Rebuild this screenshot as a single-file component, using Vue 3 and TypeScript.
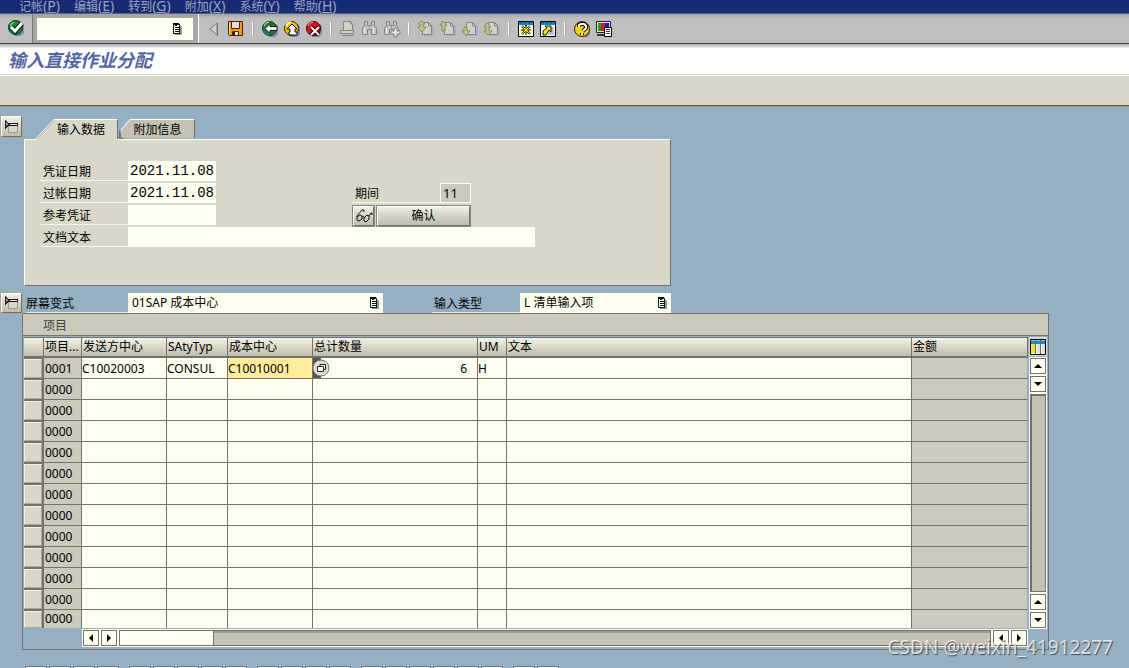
<script setup lang="ts">
import { ref } from 'vue'

interface MenuEntry { text: string; key: string }
interface Tool { id: string; label: string; disabled?: boolean }
interface Row { item: string; sender: string; activity: string; center: string; quantity: string; unit: string; text: string }

const menus: MenuEntry[] = [
  { text: '记帐', key: 'P' },
  { text: '编辑', key: 'E' },
  { text: '转到', key: 'G' },
  { text: '附加', key: 'X' },
  { text: '系统', key: 'Y' },
  { text: '帮助', key: 'H' },
]

const toolGroups: Tool[][] = [
  [{ id: 'collapse', label: '收起' }, { id: 'save', label: '保存' }],
  [{ id: 'back', label: '返回' }, { id: 'exit', label: '退出' }, { id: 'cancel', label: '取消' }],
  [
    { id: 'print', label: '打印', disabled: true },
    { id: 'find', label: '查找', disabled: true },
    { id: 'findnext', label: '查找下一个', disabled: true },
  ],
  [
    { id: 'first', label: '第一页', disabled: true },
    { id: 'prev', label: '上一页', disabled: true },
    { id: 'next', label: '下一页', disabled: true },
    { id: 'last', label: '最后一页', disabled: true },
  ],
  [{ id: 'session', label: '新建会话' }, { id: 'shortcut', label: '创建快捷方式' }],
  [{ id: 'help', label: '帮助' }, { id: 'layout', label: '定制本地布局' }],
]

const command = ref('')
const activeTab = ref(0)
const documentDate = ref('2021.11.08')
const postingDate = ref('2021.11.08')
const reference = ref('')
const documentText = ref('')
const period = ref('11')
const variant = ref('01SAP 成本中心')
const inputType = ref('L 清单输入项')

const blank = (): Row => ({ item: '0000', sender: '', activity: '', center: '', quantity: '', unit: '', text: '' })
const rows = ref<Row[]>([
  { item: '0001', sender: 'C10020003', activity: 'CONSUL', center: 'C10010001', quantity: '6', unit: 'H', text: '' },
  ...Array.from({ length: 12 }, blank),
])

const footerGroups = [4, 5, 4, 6, 2]
</script>

<template>
  <div class="window">
    <nav class="menubar">
      <a v-for="m in menus" :key="m.key" href="#">{{ m.text }}<span class="accel">(<u>{{ m.key }}</u>)</span></a>
    </nav>

    <header class="toolbar">
      <button class="tool enter" aria-label="回车">
        <svg width="18" height="18" viewBox="0 0 18 18">
          <path d="M7 4h8l2 3v7l-3 3H8z" fill="#8585bd" />
          <circle cx="8.500" cy="8.500" r="7" fill="#168a28" stroke="#052d08" />
          <path d="M3 9c0 3 2 5 5 5" stroke="#0f7d86" stroke-width="2" fill="none" />
          <path d="M4 5l3-2M4 7V5" stroke="#c2efb0" fill="none" />
          <path d="M4 8l4 4 7-8" stroke="#032504" stroke-width="5" fill="none" />
          <path d="M4 8l4 4 7-8" stroke="#fff" stroke-width="3" fill="none" />
        </svg>
      </button>
      <div class="command">
        <div class="command-box">
          <input v-model="command" aria-label="命令" />
          <svg class="list-icon" width="10" height="12" viewBox="0 0 10 12" shape-rendering="crispEdges"><path d="M3 3h7v9H3z" fill="#999" /><path d="M1.500 1.500h6v9h-6z" fill="#fffff0" stroke="#111" /><path d="M0 0h7L4 3H3z" fill="#000" /><path d="M3 4.500h4M3 6.500h4M3 8.500h4" stroke="#111" /></svg>
        </div>
      </div>
      <div class="tools">
        <div v-for="(group, g) in toolGroups" :key="g" class="tool-group">
          <button v-for="t in group" :key="t.id" class="tool" :aria-label="t.label" :disabled="t.disabled">
            <svg width="18" height="18" viewBox="0 0 18 18">
              <g v-if="t.id === 'collapse'">
                <path d="M13 3v13l-2-1z" fill="#f4f4f4" /><path d="M12 3v12L5 9z" fill="#d0d0cc" stroke="#77776f" /><path d="M12.500 3v13" stroke="#777" />
              </g>
              <g v-else-if="t.id === 'save'">
                <path d="M1.500 1.500h14v14h-13l-1-1z" fill="#ff9c00" stroke="#3d1c00" />
                <path d="M4.500 1.500h8v7h-8z" fill="#e3daf0" stroke="#4d2200" />
                <path d="M5.500 11.500h6v4h-6z" fill="#eee" stroke="#4d2200" /><path d="M6 12h2v3H6z" fill="#352010" />
                <path d="M2 2h1v12H2z" fill="#ffe28a" />
              </g>
              <g v-else-if="t.id === 'back'">
                <path d="M7 4h8l2 3v7l-3 3H8z" fill="#8585bd" /><circle cx="8.500" cy="8.500" r="7" fill="#188b28" stroke="#052d08" />
                <path d="M3 9c0 3 2 5 5 5" stroke="#0f7d86" stroke-width="2" fill="none" />
                <path d="M3 6l2-3 3-1" fill="none" stroke="#b6e8ac" />
                <path d="M4 8.500l5-5v3h7v4H9v3z" fill="#fff" stroke="#111" />
              </g>
              <g v-else-if="t.id === 'exit'">
                <path d="M7 4h8l2 3v7l-3 3H8z" fill="#8585bd" /><circle cx="8.500" cy="8.500" r="7" fill="#f8bd00" stroke="#302200" />
                <path d="M3 6l2-3 3-1" fill="none" stroke="#fff7a0" stroke-width="2" />
                <path d="M9 4l5 5h-2v3h2v3H6v-3h1V9H4z" fill="#fff" stroke="#111" />
              </g>
              <g v-else-if="t.id === 'cancel'">
                <path d="M7 4h8l2 3v7l-3 3H8z" fill="#8585bd" /><circle cx="8.500" cy="8.500" r="7" fill="#df1019" stroke="#3b0004" />
                <path d="M3 6l2-3 3-1" fill="none" stroke="#ffb0a5" />
                <path d="M6 7l8 8M14 7l-8 8" stroke="#210000" stroke-width="4" /><path d="M6 7l8 8M14 7l-8 8" stroke="#fff" stroke-width="2" />
              </g>
              <g v-else-if="t.id === 'print'">
                <path d="M4.500 1.500h7l2 3v6h-9z" fill="#d3d2c3" stroke="#828280" /><path d="M1.500 10.500h13v3h-13zM3 15.500h12" fill="#d3d2c3" stroke="#828280" /><path d="M11.500 1v3h2" fill="none" stroke="#828280" />
              </g>
              <g v-else-if="t.id === 'find' || t.id === 'findnext'">
                <path d="M3.500 1.500h3v4h4v-4h3v4l2 3v6h-5v-5h-4v5h-5v-6l2-3z" fill="#c8c7bb" stroke="#828280" />
                <path d="M3 5.500h4M10 5.500h4M8.500 6v4" stroke="#969690" /><path d="M3.500 8v6M12.500 8v6" stroke="#eee" />
                <path v-if="t.id === 'findnext'" d="M11 8h3v3h3v3h-3v3h-3v-3H8v-3h3z" fill="#e7e7d9" stroke="#828280" />
              </g>
              <g v-else-if="t.id === 'first' || t.id === 'prev' || t.id === 'next' || t.id === 'last'">
                <path d="M7 5h8l2 2v9H7z" fill="#a8add0" />
                <path d="M5.500 2.500h6l3 3v9h-9z" fill="#d2d1c3" stroke="#828280" /><path d="M11.500 2v4h3" fill="none" stroke="#828280" />
                <path v-if="t.id === 'first'" d="M4 1l4 3H6v3h3l-4 5-4-5h2V4H1z" fill="#c8c588" stroke="#858565" />
                <path v-else-if="t.id === 'prev'" d="M4 1l4 4H6v6H3V5H1z" fill="#c8c588" stroke="#858565" />
                <path v-else-if="t.id === 'next'" d="M3 7h3v4h3l-4 5-4-5h2z" fill="#c8c588" stroke="#858565" />
                <path v-else d="M4 3l4 4H6v4h3l-4 4-4-4h2V7H1z" fill="#c8c588" stroke="#858565" />
              </g>
              <g v-else-if="t.id === 'session'">
                <path d="M1.500 1.500h15v15h-15z" fill="#fff" stroke="#000" /><path d="M2 2h14v3H2z" fill="#1687bd" /><path d="M3 3h2M7 3h2M11 3h2" stroke="#0b517c" />
                <path d="M9 5v10M4 10h10M5 6l8 8M13 6l-8 8" stroke="#171700" stroke-width="2" /><path d="M9 6v9M4 10h10M5 6l8 8M13 6l-8 8" stroke="#fff200" />
              </g>
              <g v-else-if="t.id === 'shortcut'">
                <path d="M1.500 1.500h15v15h-15z" fill="#fff" stroke="#000" /><path d="M2 2h14v3H2z" fill="#1687bd" /><path d="M3 3h2M7 3h2M11 3h2" stroke="#0b517c" />
                <path d="M10 7h5v8H9z" fill="#bdbfe2" />
                <path d="M4 15v-4l4-3-2-2h6v6l-2-2-3 5z" fill="#ffe300" stroke="#111" />
              </g>
              <g v-else-if="t.id === 'help'">
                <path d="M7 4h8l2 3v7l-3 3H8z" fill="#7777ac" /><circle cx="9" cy="9" r="7.500" fill="#ffd000" stroke="#332400" />
                <path d="M6 7V5l2-1h3l2 2v2l-3 3M9 13v2" fill="none" stroke="#111" stroke-width="4" /><path d="M6 7V5l2-1h3l2 2v2l-3 3M9 13v2" fill="none" stroke="#fff" stroke-width="2" />
              </g>
              <g v-else>
                <path d="M1.500 1.500h14v11h-14z" fill="#e4e4e4" stroke="#222" /><path d="M3 3h3v8H3z" fill="#00ad20" /><path d="M6 3h4v8H6z" fill="#ed1111" /><path d="M10 3h4v8h-4z" fill="#1716e5" /><path d="M2 15h8" stroke="#333" stroke-width="2" />
                <path d="M9.500 7.500h7v9h-7z" fill="#fff" stroke="#000" /><path d="M11 9.500h4M11 11.500h4M11 13.500h4" stroke="#333" />
              </g>
            </svg>
          </button>
        </div>
      </div>
    </header>

    <div class="title-row"><h1>输入直接作业分配</h1></div>
    <div class="app-toolbar"></div>

    <main class="workspace">
      <section class="header-block">
        <button class="raised square" aria-label="收起抬头">
          <svg width="15" height="14" viewBox="0 0 15 14" shape-rendering="crispEdges"><path d="M4.500 5.500h9v7h-9z" fill="#d9d8c8" stroke="#999990" /><path d="M3 4.500h11" stroke="#111" stroke-width="3" /><path d="M4 4.500h9" stroke="#fff" /><path d="M1.500 1l4 3-4 4z" fill="#9a78bd" stroke="#222" /></svg>
        </button>
        <div class="tabs-area">
          <div class="tabs" role="tablist">
            <button class="tab first" role="tab" :aria-selected="activeTab === 0" @click="activeTab = 0">
              <svg width="84" height="22" viewBox="0 0 84 22"><path d="M0 22L20 1h62v21z" fill="#d9d8c8" /><path d="M0 20.500L19 .5h63" fill="none" stroke="#fff" /><path d="M82.500 1v19" stroke="#74736b" /></svg>
              <span>输入数据</span>
            </button>
            <button class="tab second" role="tab" :aria-selected="activeTab === 1" @click="activeTab = 1">
              <svg width="77" height="20" viewBox="0 0 77 20"><path d="M0 11v9h5z" fill="#74736b" /><path d="M2 18V10L11 1h64v18H4z" fill="#c5c2b3" /><path d="M2 11L11 .5h64" fill="none" stroke="#fff" /><path d="M75.500 1v18" fill="none" stroke="#74736b" /></svg>
              <span>附加信息</span>
            </button>
          </div>
          <form class="panel" @submit.prevent>
            <div class="form-row">
              <label for="doc-date">凭证日期</label><input id="doc-date" v-model="documentDate" class="date" />
            </div>
            <div class="form-row">
              <label for="post-date">过帐日期</label><input id="post-date" v-model="postingDate" class="date" />
              <label for="period" class="second-col">期间</label><input id="period" class="period" :value="period" readonly />
            </div>
            <div class="form-row">
              <label for="reference">参考凭证</label><input id="reference" v-model="reference" class="date" />
              <div class="actions">
                <button type="button" class="raised glasses" aria-label="显示">
                  <svg width="18" height="14" viewBox="0 0 18 14" fill="none" stroke="#111"><path d="M2 7l5-6h2v2M2 7v4l2 1 3-2V7L5 6 2 8M7 8l2-1M9 8v4l2 1 3-3V7l-2-1-3 3M14 7l2-3h1v2" /></svg>
                </button>
                <button type="submit" class="raised confirm">确认</button>
              </div>
            </div>
            <div class="form-row">
              <label for="doc-text">文档文本</label><input id="doc-text" v-model="documentText" class="long" />
            </div>
          </form>
        </div>
      </section>

      <section class="variant-row">
        <button class="raised square" aria-label="收起明细">
          <svg width="15" height="14" viewBox="0 0 15 14" shape-rendering="crispEdges"><path d="M4.500 5.500h9v7h-9z" fill="#d9d8c8" stroke="#999990" /><path d="M3 4.500h11" stroke="#111" stroke-width="3" /><path d="M4 4.500h9" stroke="#fff" /><path d="M1.500 1l4 3-4 4z" fill="#9a78bd" stroke="#222" /></svg>
        </button>
        <label for="variant" class="variant-label">屏幕变式</label>
        <div class="picker variant">
          <select id="variant" v-model="variant"><option>01SAP 成本中心</option></select>
          <svg class="list-icon" width="10" height="12" viewBox="0 0 10 12" shape-rendering="crispEdges"><path d="M3 3h7v9H3z" fill="#999" /><path d="M1.500 1.500h6v9h-6z" fill="#fffff0" stroke="#111" /><path d="M0 0h7L4 3H3z" fill="#000" /><path d="M3 4.500h4M3 6.500h4M3 8.500h4" stroke="#111" /></svg>
        </div>
        <label for="input-type" class="type-label">输入类型</label>
        <div class="picker type">
          <select id="input-type" v-model="inputType"><option>L 清单输入项</option></select>
          <svg class="list-icon" width="10" height="12" viewBox="0 0 10 12" shape-rendering="crispEdges"><path d="M3 3h7v9H3z" fill="#999" /><path d="M1.500 1.500h6v9h-6z" fill="#fffff0" stroke="#111" /><path d="M0 0h7L4 3H3z" fill="#000" /><path d="M3 4.500h4M3 6.500h4M3 8.500h4" stroke="#111" /></svg>
        </div>
      </section>

      <section class="items">
        <h2>项目</h2>
        <div class="grid-area">
          <div class="table-wrap">
            <table>
              <colgroup>
                <col class="c-select" /><col class="c-item" /><col class="c-sender" /><col class="c-activity" /><col class="c-center" /><col class="c-quantity" /><col class="c-unit" /><col /><col class="c-amount" />
              </colgroup>
              <thead>
                <tr>
                  <th class="select-head"></th><th>项目...</th><th>发送方中心</th><th>SAtyTyp</th><th>成本中心</th><th>总计数量</th><th>UM</th><th>文本</th><th>金额</th>
                </tr>
              </thead>
              <tbody>
                <tr v-for="(row, i) in rows" :key="i">
                  <td class="select-cell"><button :aria-label="'选择行 ' + (i + 1)"></button></td>
                  <td class="fixed">{{ row.item }}</td>
                  <td><input v-model="row.sender" aria-label="发送方中心" /></td>
                  <td><input v-model="row.activity" aria-label="SAtyTyp" /></td>
                  <td :class="{ current: i === 0 }"><input v-model="row.center" aria-label="成本中心" /></td>
                  <td class="quantity">
                    <input v-model="row.quantity" aria-label="总计数量" />
                    <button v-if="i === 0" class="match" aria-label="搜索帮助">
                      <svg width="17" height="20" viewBox="0 0 17 20"><path d="M0 0h8v20H0z" fill="#55554f" /><circle cx="8" cy="10" r="8" fill="#deddd2" stroke="#777770" /><path d="M4.500 8.500h6v5h-6zM7 8V6.500h5.500v5H11" fill="#fff" stroke="#222" /></svg>
                    </button>
                  </td>
                  <td><input v-model="row.unit" aria-label="UM" /></td>
                  <td><input v-model="row.text" aria-label="文本" /></td>
                  <td class="fixed amount"></td>
                </tr>
              </tbody>
            </table>
          </div>
          <div class="vscroll">
            <button class="config" aria-label="表格设置">
              <svg width="16" height="16" viewBox="0 0 16 16"><path d="M.5.5h15v15H.5z" fill="#fff" stroke="#000" /><path d="M1 1h14v4H1z" fill="#2586c8" /><path d="M1 1.500h14" stroke="#83cdec" /><path d="M1 5h4v9H1z" fill="#ffe500" /><path d="M7 5h3v9H7zM12 5h3v9h-3z" fill="#ddd" /><path d="M5.500 1v14M10.500 1v14" stroke="#666" /></svg>
            </button>
            <button class="arrow" aria-label="向上"><svg width="8" height="4" viewBox="0 0 8 4"><path d="M4 0l4 4H0z" /></svg></button>
            <button class="arrow" aria-label="向下"><svg width="8" height="4" viewBox="0 0 8 4"><path d="M0 0h8L4 4z" /></svg></button>
            <div class="vtrack"></div>
            <button class="arrow" aria-label="上一行"><svg width="8" height="4" viewBox="0 0 8 4"><path d="M4 0l4 4H0z" /></svg></button>
            <button class="arrow" aria-label="下一行"><svg width="8" height="4" viewBox="0 0 8 4"><path d="M0 0h8L4 4z" /></svg></button>
          </div>
          <div class="hscroll">
            <button class="arrow" aria-label="向左"><svg width="4" height="8" viewBox="0 0 4 8"><path d="M4 0v8L0 4z" /></svg></button>
            <button class="arrow" aria-label="向右"><svg width="4" height="8" viewBox="0 0 4 8"><path d="M0 0l4 4-4 4z" /></svg></button>
            <div class="htrack"><div class="thumb"></div></div>
            <button class="arrow" aria-label="左一列"><svg width="4" height="8" viewBox="0 0 4 8"><path d="M4 0v8L0 4z" /></svg></button>
            <button class="arrow" aria-label="右一列"><svg width="4" height="8" viewBox="0 0 4 8"><path d="M0 0l4 4-4 4z" /></svg></button>
          </div>
        </div>
      </section>

      <footer class="footer">
        <div v-for="(n, g) in footerGroups" :key="g" class="footer-group">
          <button v-for="b in n" :key="b" :aria-label="'功能 ' + (g + 1) + '-' + b"></button>
        </div>
      </footer>
    </main>
    <div class="watermark">CSDN @weixin_41912277</div>
  </div>
</template>

<style>
body { margin: 0; }
</style>

<style scoped>
* { box-sizing: border-box; }
.window {
  position: relative;
  display: flex;
  flex-direction: column;
  height: 100vh;
  overflow: hidden;
  background: #95b0c3;
  color: #000;
  font: 12px/16px "Noto Sans", "Noto Sans CJK SC", sans-serif;
}
button, input, select { font: inherit; color: inherit; margin: 0; padding: 0; border: 0; border-radius: 0; outline: 0; min-width: 0; }
svg { display: block; flex: none; }

.menubar { display: flex; align-items: flex-start; gap: 14px; flex: none; height: 14px; padding: 0 19px; background: #172a74; border-bottom: 1px solid #59607c; line-height: 12px; }
.menubar a { color: #9ba3c0; text-decoration: none; white-space: nowrap; }
.accel { font-size: 14px; }

.toolbar { display: flex; flex: none; height: 30px; background: linear-gradient(#a0a0a0, #bebebe 4px); border-bottom: 1px solid #444; }
.tool { display: flex; align-items: center; justify-content: center; width: 22px; height: 28px; background: none; }
.tool.enter { width: 32px; }
.command { display: flex; padding: 4px 5px 3px 4px; background: #a6a6a6; border-left: 1px solid #777; border-right: 1px solid #fff; }
.command-box { display: flex; align-items: center; width: 156px; background: #fffff0; padding-right: 11px; }
.command-box input { flex: 1; height: 100%; background: none; padding-left: 4px; }
.tools { display: flex; padding-left: 4px; }
.tool-group { display: flex; align-items: center; }
.tool-group + .tool-group::before { content: ""; width: 2px; height: 13px; margin: 0 5px; background: linear-gradient(90deg, #fff 50%, #aaa 50%); }

.title-row { flex: none; height: 31px; padding: 4px 8px; background: linear-gradient(#aaa, #ddd 3px, #fff 4px); border-bottom: 1px solid #d2d2ca; }
h1 { margin: 0; font-size: 18px; line-height: 24px; font-style: italic; color: #5466a6; }
.app-toolbar { flex: none; height: 31px; background: #d9d8c8; border-top: 1px solid #fff; border-bottom: 1px solid #55544c; }

.workspace { flex: 1; min-height: 0; padding: 8px 0 0; border-top: 2px solid #a4a196; }
.header-block { display: flex; align-items: flex-start; }
.raised { display: flex; align-items: center; justify-content: center; background: linear-gradient(#f2f1e6, #d9d8c8 40%, #bfbdae); border: 1px solid #74736b; border-top-color: #fff; border-left-color: #fff; box-shadow: 0 0 0 1px #8b897e; }
.square { width: 21px; height: 21px; margin: 0 2px 0 1px; box-shadow: 0 0 0 1px #a5a59a; flex: none; }
.tabs-area { width: 647px; padding-top: 3px; }
.tabs { display: flex; height: 20px; padding-left: 11px; }
.tab { position: relative; background: none; height: 20px; }
.tab svg { position: absolute; left: 0; top: 0; }
.tab span { position: relative; display: block; line-height: 22px; }
.tab.first { width: 84px; padding-left: 8px; }
.tab.first svg { z-index: 1; }
.tab.first span { z-index: 2; }
.tab.second { width: 77px; }
.panel { display: flex; flex-direction: column; gap: 2px; min-height: 147px; padding: 21px 15px; background: #d9d8c8; border: 1px solid #fff; border-right-color: #74736b; border-bottom-color: #74736b; }
.form-row { display: flex; height: 20px; }
.form-row label { width: 88px; padding: 3px 3px 0; line-height: 16px; border-bottom: 1px solid #f6f5e8; }
.form-row input { border: 1px solid #fff; background: #fffff0; padding: 0 0 0 1px; font: 14px/18px "Liberation Mono", monospace; }
.form-row .date { width: 88px; }
.form-row .second-col { margin-left: 136px; }
.form-row .period { width: 31px; padding-left: 2px; background: #cdcabc; font: inherit; font-size: 13px; }
.long { width: 407px; }
.actions { display: flex; gap: 3px; margin-left: 137px; padding-top: 1px; }
.glasses { width: 21px; height: 20px; }
.confirm { width: 93px; height: 20px; }

.variant-row { display: flex; height: 20px; margin-top: 7px; }
.variant-row .square { height: 20px; margin-right: 4px; }
.variant-label { width: 102px; padding: 3px 0 0; line-height: 16px; border-bottom: 1px solid #e8e8dc; }
.picker { position: relative; display: flex; background: #fffff0; }
.picker select { width: 100%; appearance: none; background: transparent; padding: 0 20px 0 4px; height: 20px; }
.picker .list-icon { position: absolute; right: 4px; top: 4px; pointer-events: none; }
.variant { width: 255px; }
.type { width: 151px; }
.type-label { width: 88px; margin-left: 49px; padding: 3px 2px 0; border-bottom: 1px solid #e8e8dc; }

.items { margin: 0 80px 0 22px; border: 1px solid #74736b; }
h2 { margin: 0; height: 22px; padding: 4px 20px; font-size: 12px; line-height: 16px; font-weight: 400; color: #444; background: #cdcabc; border-bottom: 1px solid #74736b; }
.grid-area { display: grid; grid-template-columns: minmax(0, 1fr) 19px; padding: 1px 1px 2px; }
table { width: 100%; table-layout: fixed; border-collapse: separate; border-spacing: 0; }
.c-select { width: 20px; }
.c-item { width: 38px; }
.c-sender { width: 85px; }
.c-activity { width: 61px; }
.c-center { width: 85px; }
.c-quantity { width: 165px; }
.c-unit { width: 29px; }
.c-amount { width: 116px; }
th { height: 21px; padding: 0 0 0 1px; text-align: left; font-weight: 400; line-height: 18px; white-space: nowrap; background: linear-gradient(#f3f2e6, #d9d8c8 50%, #bfbdae); border: solid #74736b; border-width: 1px 1px 2px 0; }
td { position: relative; height: 21px; padding: 0; line-height: 20px; background: #fffff0; border: solid #74736b; border-width: 0 1px 1px 0; }
td input { display: block; width: 100%; height: 20px; padding-top: 1px; background: transparent; }
td.fixed { background: #cdcabc; padding: 1px 0 0 1px; line-height: 19px; }
td.amount { border-right-color: #95b0c3; }
td.current { background: #ffed9c; }
.quantity input { text-align: right; padding-right: 10px; }
.match { position: absolute; left: 0; top: 0; background: none; width: 17px; height: 20px; }
td.select-cell { border-width: 0; background: #74736b; }
.select-cell button { display: block; width: 18px; height: 19px; background: #d9d8c8; border: 1px solid #f5f4e8; border-right-color: #aaa89a; border-bottom-color: #aaa89a; }
tr:last-child td { height: 18px; border-bottom-width: 0; }
tr:last-child td input { height: 18px; padding: 0; }
tr:last-child td.fixed { padding-top: 0; line-height: 18px; }
tr:last-child .select-cell button { height: 17px; }

.vscroll { display: flex; flex-direction: column; gap: 2px; padding-left: 1px; }
.config { display: flex; align-items: center; justify-content: center; width: 18px; height: 19px; background: #d9d8c8; }
.arrow { display: flex; align-items: center; justify-content: center; flex: none; width: 16px; height: 16px; background: #fffff0; border: 1px solid #74736b; box-shadow: 0 0 0 1px #fff; }
.vscroll .arrow { margin-left: 1px; }
.vtrack { flex: 1; width: 16px; margin-left: 1px; background: #c5c2b3; border: 1px solid #74736b; border-top-width: 2px; border-left-width: 2px; box-shadow: 0 0 0 1px #fff; }
.hscroll { grid-column: 1 / -1; display: flex; align-items: center; gap: 2px; height: 19px; padding: 0 20px 0 59px; }
.htrack { flex: 1; height: 16px; background: #c5c2b3; border: solid #74736b; border-width: 1px 1px 1px 0; box-shadow: 0 0 0 1px #fff, inset 0 2px #9b9a8e; }
.thumb { width: 95px; height: 14px; background: #fffff0; border: solid #74736b; border-width: 0 1px; }

.footer { display: flex; gap: 10px; padding: 16px 25px 0; }
.footer-group { display: flex; gap: 2px; }
.footer button { width: 22px; height: 22px; background: #fff; border: 1px solid #74736b; }
.watermark { position: absolute; right: 16px; bottom: 7px; font-size: 19px; line-height: 28px; color: rgba(255, 255, 255, .75); text-shadow: 1px 1px 1px rgba(50, 50, 50, .8); }
</style>
